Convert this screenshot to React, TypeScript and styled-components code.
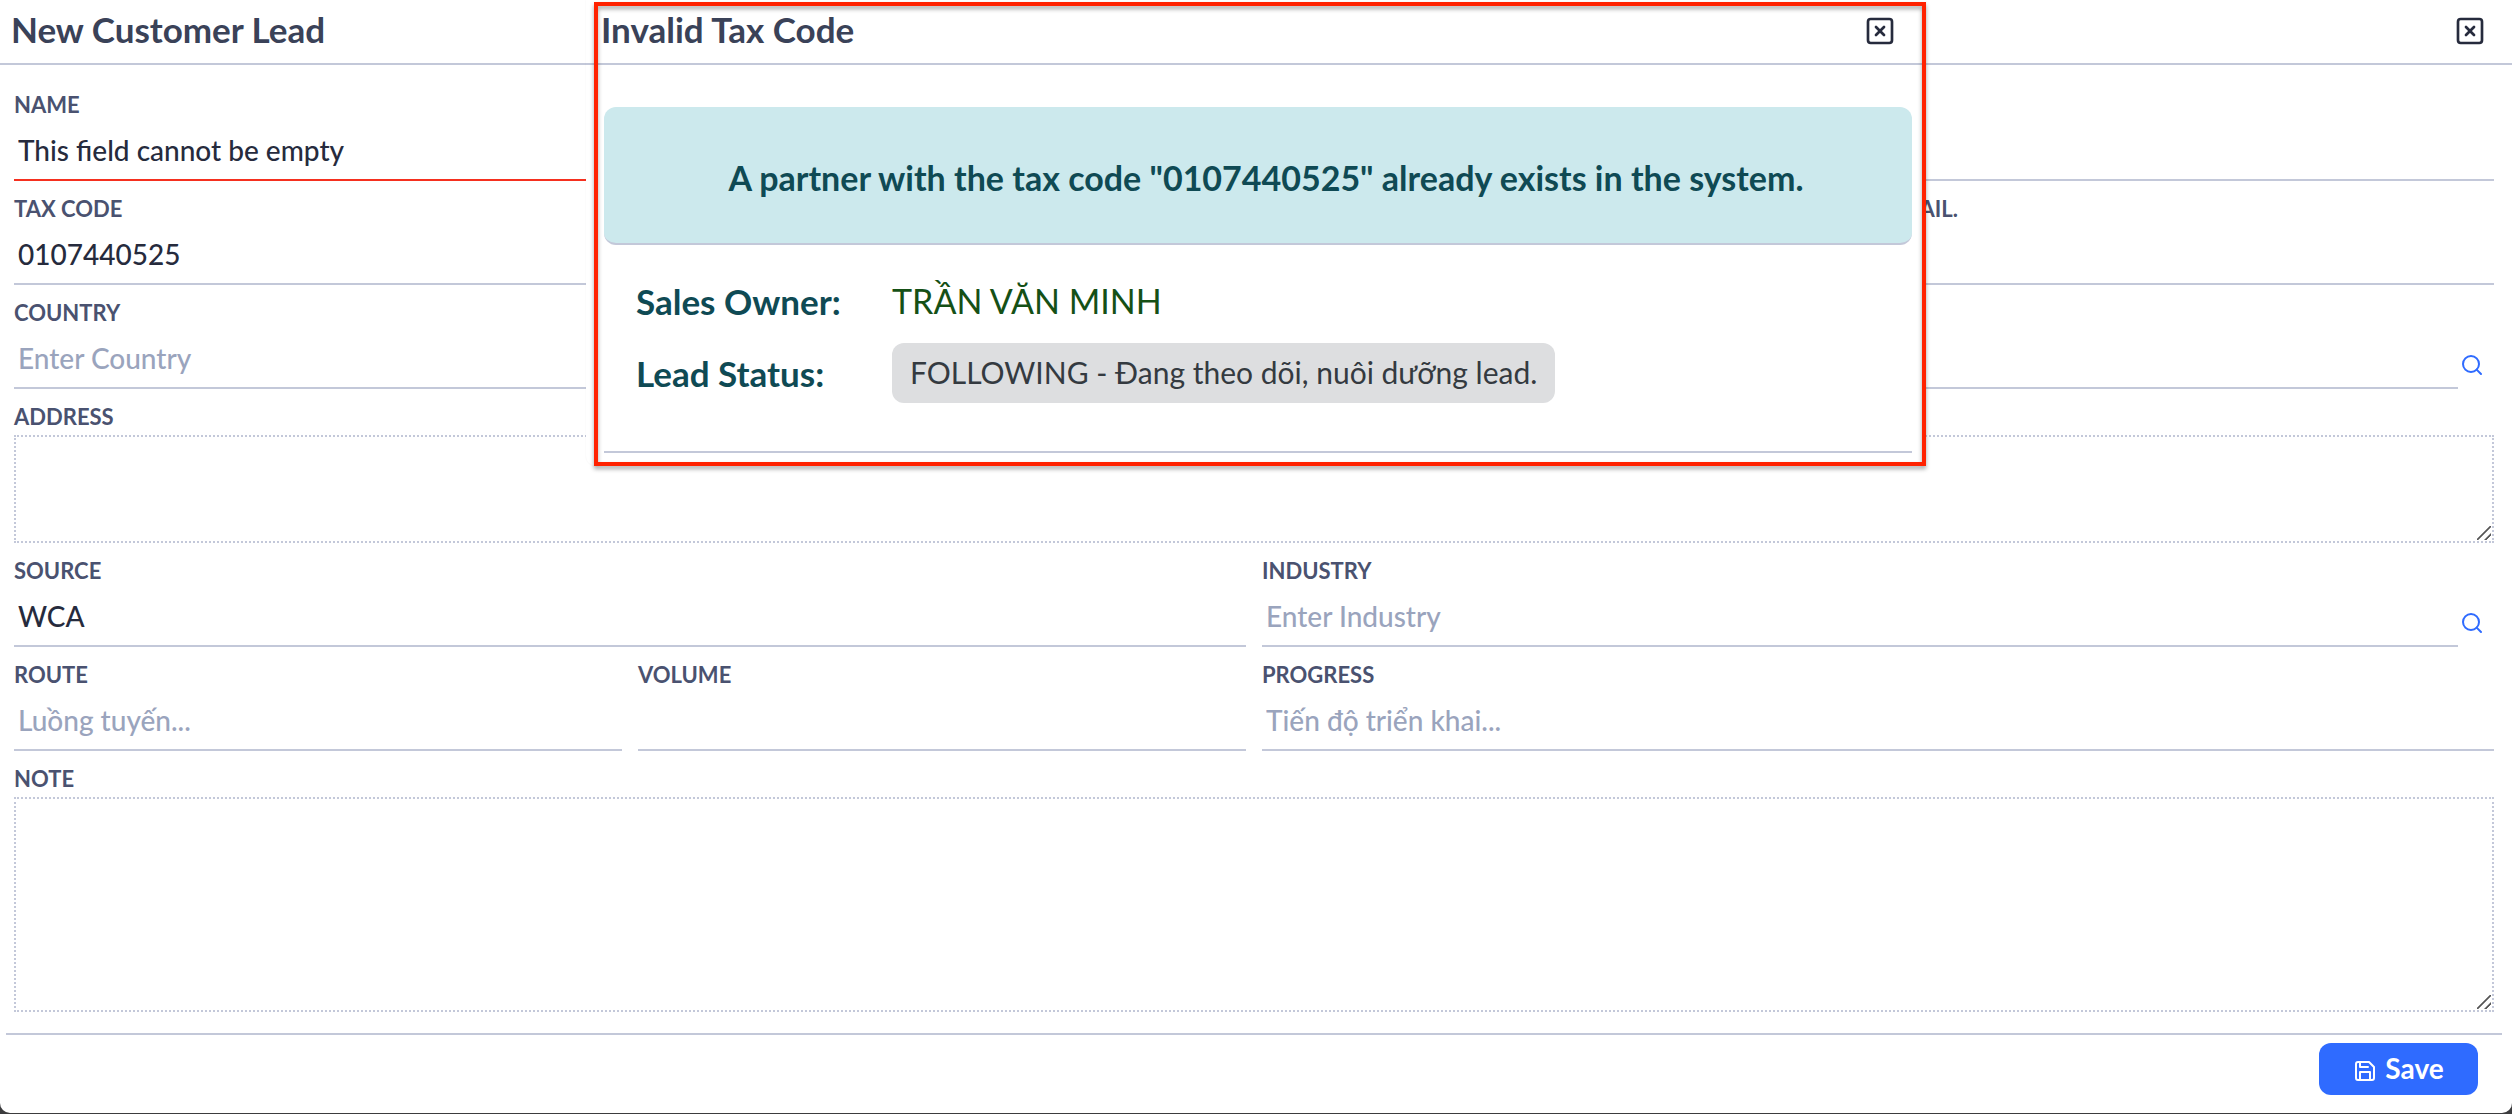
import React from 'react';
import styled, { createGlobalStyle } from 'styled-components';
import { FiSave, FiSearch, FiXSquare } from 'react-icons/fi';

const color = {
  title: '#3a4258',
  label: '#4a5270',
  text: '#262b3d',
  placeholder: '#9aa4bd',
  line: '#c3c8d9',
  error: '#f5301f',
  teal: '#0f4a54',
  primary: '#2f6bff',
};

const GlobalStyle = createGlobalStyle`
  *, *::before, *::after { box-sizing: border-box; }
  body {
    margin: 0;
    background: #3c3c3e;
    font-family: Lato, "Noto Sans", sans-serif;
    color: ${color.text};
  }
  button, input, textarea { font: inherit; color: inherit; }
`;

const Window = styled.main`
  position: relative;
  display: flex;
  flex-direction: column;
  min-height: calc(100vh - 1px);
  background: #fff;
  border-radius: 0 0 10px 10px;
  overflow: hidden;
`;

const Header = styled.header<{ $left: number; $right: number }>`
  display: flex;
  align-items: center;
  justify-content: space-between;
  height: 65px;
  padding: 0 ${p => p.$right}px 2px ${p => p.$left}px;
  border-bottom: 2px solid ${color.line};
`;

const Title = styled.h1`
  margin: 0;
  padding-bottom: 4px;
  font-size: 35px;
  line-height: 40px;
  font-weight: 700;
  color: ${color.title};
`;

const IconButton = styled.button`
  display: flex;
  align-items: center;
  justify-content: center;
  padding: 0;
  border: 0;
  background: none;
  cursor: pointer;
`;

const LookupButton = styled(IconButton)`
  width: 36px;
  height: 48px;
  padding-right: 8px;
  color: ${color.primary};
`;

const Form = styled.form`
  display: flex;
  flex: 1;
  flex-direction: column;
`;

const Fields = styled.div`
  display: grid;
  grid-template-columns: repeat(4, minmax(0, 1fr));
  gap: 8px 16px;
  padding: 20px 18px 21px 14px;
`;

const FieldBox = styled.div<{ $span: number }>`
  grid-column: span ${p => p.$span};
  display: flex;
  flex-direction: column;
  justify-content: flex-end;
`;

const Label = styled.label`
  padding-top: 4px;
  font-size: 22px;
  line-height: 32px;
  font-weight: 700;
  color: ${color.label};
`;

const Control = styled.div`
  display: flex;
  align-items: flex-end;
`;

const Input = styled.input<{ $invalid?: boolean }>`
  flex: 1;
  min-width: 0;
  height: 60px;
  padding: 0 4px;
  border: 0;
  border-bottom: 2px solid ${p => (p.$invalid ? color.error : color.line)};
  border-radius: 0;
  outline: none;
  background: transparent;
  font-size: 28px;
  font-weight: 500;
  &::placeholder { color: ${color.placeholder}; opacity: 1; }
`;

const TextArea = styled.textarea<{ $height: number }>`
  display: block;
  height: ${p => p.$height}px;
  margin-top: 2px;
  padding: 4px;
  border: 2px dotted ${color.line};
  outline: none;
  resize: vertical;
  font-size: 28px;
  &::-webkit-resizer {
    background: linear-gradient(
        135deg,
        transparent 45%, #555 47%, #555 53%, transparent 55%,
        transparent 74%, #555 76%, #555 82%, transparent 84%
      ) 0 0 / 14px 14px no-repeat;
  }
`;

const Footer = styled.footer`
  display: flex;
  justify-content: flex-end;
  margin: 0 10px 0 6px;
  padding: 8px 24px 18px;
  border-top: 2px solid ${color.line};
`;

const SaveButton = styled.button`
  display: flex;
  align-items: center;
  justify-content: center;
  gap: 8px;
  width: 159px;
  height: 52px;
  padding: 0 0 2px;
  border: 0;
  border-radius: 12px;
  background: ${color.primary};
  color: #fff;
  font-size: 28px;
  line-height: 40px;
  font-weight: 700;
  cursor: pointer;
  svg { margin-top: 6px; }
`;

const Dialog = styled.section`
  position: absolute;
  top: 0;
  left: 0;
  right: 0;
  width: 1340px;
  max-width: 100%;
  margin: 0 auto;
  padding-bottom: 13px;
  background: #fff;
  border-radius: 0 0 10px 10px;
  box-shadow: 0 0 2px rgba(0, 0, 0, 0.06);
`;

const Highlight = styled.div`
  position: absolute;
  inset: 2px 0 0 8px;
  border: 4px solid #ff2200;
  filter: drop-shadow(0 3px 2px rgba(0, 0, 0, 0.35));
  pointer-events: none;
`;

const DialogBody = styled.div`
  margin: 42px 14px 0 18px;
  padding-bottom: 48px;
  border-bottom: 2px solid ${color.line};
`;

const Banner = styled.p`
  display: flex;
  align-items: center;
  justify-content: center;
  height: 138px;
  margin: 0;
  padding: 6px 0 0 16px;
  border-bottom: 2px solid ${color.line};
  border-radius: 12px;
  background: #cce9ed;
  color: ${color.teal};
  font-size: 34px;
  line-height: 40px;
  font-weight: 700;
`;

const Details = styled.dl`
  display: grid;
  grid-template-columns: 256px 1fr;
  align-items: center;
  gap: 14px 0;
  margin: 0;
  padding: 28px 0 0 32px;
  line-height: 56px;
`;

const Term = styled.dt`
  font-size: 35px;
  font-weight: 700;
  color: ${color.teal};
`;

const Detail = styled.dd`
  display: flex;
  margin: 0;
  font-size: 34px;
  color: #155016;
`;

const Badge = styled.span`
  padding: 1px 18px 3px;
  border-radius: 12px;
  background: #dddee0;
  color: #343a40;
  font-size: 30px;
`;

interface FieldProps {
  id: string;
  span: number;
  label?: string;
  name?: string;
  value?: string;
  placeholder?: string;
  invalid?: boolean;
  lookup?: boolean;
}

function Field({ id, span, label, name, value, placeholder, invalid, lookup }: FieldProps) {
  return (
    <FieldBox $span={span}>
      {label && <Label htmlFor={id}>{label}</Label>}
      <Control>
        <Input
          id={id}
          type="text"
          aria-label={name}
          aria-invalid={invalid}
          defaultValue={value}
          placeholder={placeholder}
          $invalid={invalid}
        />
        {lookup && (
          <LookupButton type="button" aria-label="Search">
            <FiSearch size={24} />
          </LookupButton>
        )}
      </Control>
    </FieldBox>
  );
}

function AreaField({ id, label, height }: { id: string; label: string; height: number }) {
  return (
    <FieldBox $span={4}>
      <Label htmlFor={id}>{label}</Label>
      <TextArea id={id} $height={height} />
    </FieldBox>
  );
}

function TaxCodeDialog() {
  return (
    <Dialog role="dialog" aria-labelledby="tax-dialog-title">
      <Header $left={15} $right={30}>
        <Title as="h2" id="tax-dialog-title">Invalid Tax Code</Title>
        <IconButton type="button" aria-label="Close">
          <FiXSquare size={32} />
        </IconButton>
      </Header>
      <DialogBody>
        <Banner>A partner with the tax code "0107440525" already exists in the system.</Banner>
        <Details>
          <Term>Sales Owner:</Term>
          <Detail>TRẦN VĂN MINH</Detail>
          <Term>Lead Status:</Term>
          <Detail>
            <Badge>FOLLOWING - Đang theo dõi, nuôi dưỡng lead.</Badge>
          </Detail>
        </Details>
      </DialogBody>
      <Highlight />
    </Dialog>
  );
}

export default function App() {
  return (
    <>
      <GlobalStyle />
      <Window>
        <Header $left={11} $right={26}>
          <Title>New Customer Lead</Title>
          <IconButton type="button" aria-label="Close">
            <FiXSquare size={32} />
          </IconButton>
        </Header>
        <Form onSubmit={e => e.preventDefault()}>
          <Fields>
            <Field id="name" span={2} label="NAME" value="This field cannot be empty" invalid />
            <Field id="full-name" span={2} name="Full name" />
            <Field id="tax-code" span={3} label="TAX CODE" value="0107440525" />
            <Field id="email" span={1} label="EMAIL." />
            <Field id="country" span={2} label="COUNTRY" placeholder="Enter Country" />
            <Field id="city" span={2} name="City" lookup />
            <AreaField id="address" label="ADDRESS" height={108} />
            <Field id="source" span={2} label="SOURCE" value="WCA" />
            <Field id="industry" span={2} label="INDUSTRY" placeholder="Enter Industry" lookup />
            <Field id="route" span={1} label="ROUTE" placeholder="Luồng tuyến..." />
            <Field id="volume" span={1} label="VOLUME" />
            <Field id="progress" span={2} label="PROGRESS" placeholder="Tiến độ triển khai..." />
            <AreaField id="note" label="NOTE" height={215} />
          </Fields>
          <Footer>
            <SaveButton type="submit">
              <FiSave size={24} />
              Save
            </SaveButton>
          </Footer>
        </Form>
        <TaxCodeDialog />
      </Window>
    </>
  );
}
